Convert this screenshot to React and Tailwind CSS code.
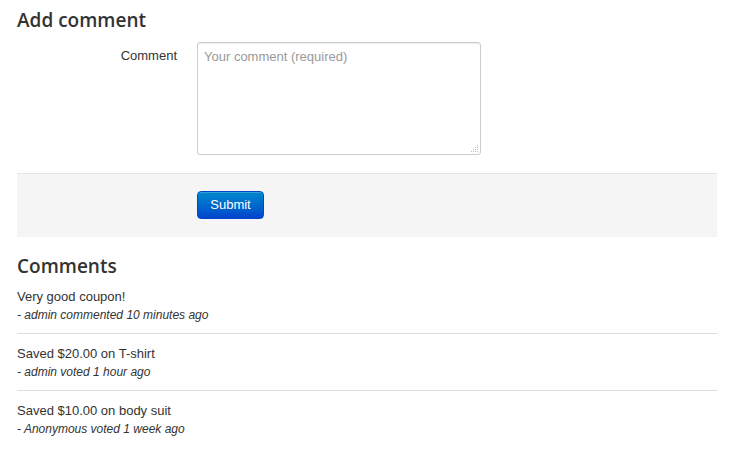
import React from 'react';

const comments = [
  { text: 'Very good coupon!', meta: '- admin commented 10 minutes ago' },
  { text: 'Saved $20.00 on T-shirt', meta: '- admin voted 1 hour ago' },
  { text: 'Saved $10.00 on body suit', meta: '- Anonymous voted 1 week ago' },
];

// dotted resize grip like the old browser textarea corner
const Grip = () => (
  <svg width="9" height="9" viewBox="0 0 9 9" className="absolute right-[2px] bottom-[2px]">
    {[[7, 1], [7, 3], [5, 3], [7, 5], [5, 5], [3, 5], [7, 7], [5, 7], [3, 7], [1, 7]].map(([x, y], i) => (
      <rect key={i} x={x} y={y} width="1" height="1" fill="#bbb" />
    ))}
  </svg>
);

const App = () => {
  return (
    <div className="w-[729px] h-[450px] bg-white text-[#333] font-['Liberation_Sans',Arial,sans-serif] text-[13px] leading-[18px]">
      <div className="w-[700px] ml-[17px] pt-[7px]">
        <h2 className="font-['Open_Sans',sans-serif] font-semibold text-[19px] leading-[26px] text-[#333]">
          Add comment
        </h2>

        <form className="mt-[9px]">
          {/* comment field */}
          <div className="flex">
            <label className="w-[160px] text-right pt-[5px] leading-[18px]">Comment</label>
            <div className="relative ml-[20px]">
              <textarea
                placeholder="Your comment (required)"
                className="block w-[284px] h-[113px] border border-[#ccc] rounded-[3px] px-[6px] py-[4px] text-[13px] leading-[20px] shadow-[inset_0_1px_1px_rgba(0,0,0,0.075)] placeholder:text-[#999] resize-none outline-none"
              />
              <Grip />
            </div>
          </div>

          <div className="mt-[18px] bg-[#f5f5f5] border-t border-[#e5e5e5] pl-[180px] pt-[17px] pb-[18px]">
            <button
              type="button"
              className="w-[67px] h-[28px] rounded-[4px] text-white text-[13px] border border-[#0044cc] bg-gradient-to-b from-[#0088cc] to-[#0044cc] shadow-[inset_0_1px_0_rgba(255,255,255,0.2)]"
            >
              Submit
            </button>
          </div>
        </form>

        <h2 className="mt-[16px] font-['Open_Sans',sans-serif] font-semibold text-[19px] leading-[26px] text-[#333]">
          Comments
        </h2>

        <div className="mt-[9px]">
          {comments.map((c, i) => (
            <div
              key={i}
              className={i < comments.length - 1 ? 'border-b border-[#ddd] pb-[9px] mb-[11px]' : ''}
            >
              <div className="leading-[18px]">{c.text}</div>
              <div className="italic text-[12px] leading-[18px] text-[#333]">{c.meta}</div>
            </div>
          ))}
        </div>
      </div>
    </div>
  );
};

export default App;
